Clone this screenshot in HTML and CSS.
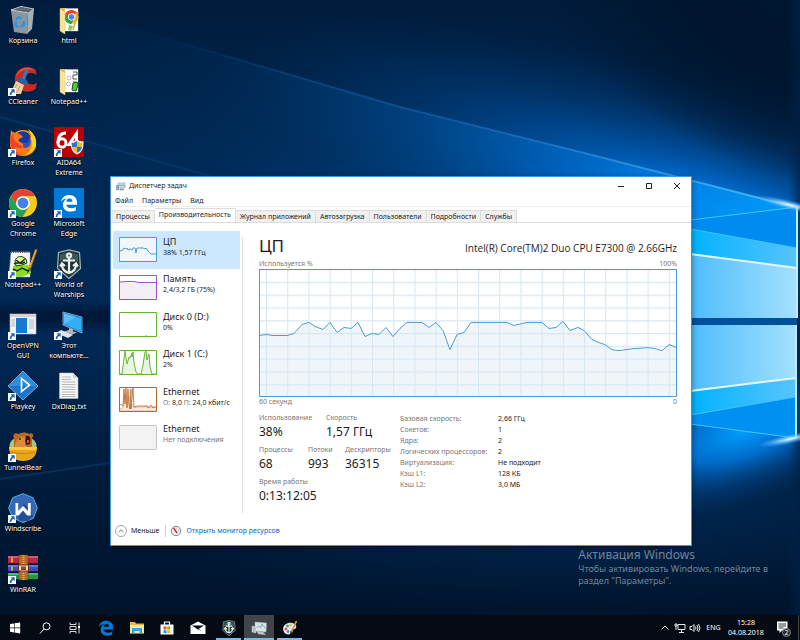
FILE: index.html
```html
<!DOCTYPE html>
<html lang="ru">
<head>
<meta charset="utf-8">
<title>Диспетчер задач</title>
<link rel="stylesheet" href="styles.css">
</head>
<body>
<svg class="wallpaper" viewBox="0 0 800 640" preserveAspectRatio="none" aria-hidden="true">
  <defs>
    <linearGradient id="base" x1="0" y1="0" x2="0" y2="1">
      <stop offset="0" stop-color="#001c3c"/><stop offset=".25" stop-color="#00264f"/><stop offset=".5" stop-color="#002a58"/><stop offset=".75" stop-color="#001c3c"/><stop offset="1" stop-color="#001128"/>
    </linearGradient>
    <radialGradient id="glow" gradientUnits="userSpaceOnUse" cx="0" cy="0" r="1" gradientTransform="translate(730 215) rotate(18) scale(520 125)">
      <stop offset="0" stop-color="#0090ff"/><stop offset=".3" stop-color="#0068cc" stop-opacity=".75"/><stop offset=".65" stop-color="#004c98" stop-opacity=".35"/><stop offset="1" stop-color="#003870" stop-opacity="0"/>
    </radialGradient>
    <radialGradient id="shade" gradientUnits="userSpaceOnUse" cx="0" cy="0" r="1" gradientTransform="translate(770 60) rotate(25) scale(250 110)">
      <stop offset="0" stop-color="#001126" stop-opacity=".75"/><stop offset=".5" stop-color="#001126" stop-opacity=".5"/><stop offset="1" stop-color="#001126" stop-opacity="0"/>
    </radialGradient>
    <linearGradient id="beam" x1="0" y1="0" x2="1" y2="0">
      <stop offset="0" stop-color="#0058a8" stop-opacity="0"/><stop offset=".25" stop-color="#0058a8" stop-opacity=".08"/><stop offset=".5" stop-color="#0060b4" stop-opacity=".28"/><stop offset=".75" stop-color="#0078dd" stop-opacity=".5"/><stop offset="1" stop-color="#00a0ff"/>
    </linearGradient>
    <linearGradient id="ray" gradientUnits="userSpaceOnUse" x1="130" y1="0" x2="798" y2="0">
      <stop offset="0" stop-color="#1a6fc4" stop-opacity="0"/><stop offset=".5" stop-color="#1a6fc4" stop-opacity=".55"/><stop offset="1" stop-color="#4cc0ff"/>
    </linearGradient>
    <radialGradient id="low" gradientUnits="userSpaceOnUse" cx="0" cy="0" r="1" gradientTransform="translate(745 430) rotate(-18) scale(190 75)">
      <stop offset="0" stop-color="#00a0ff"/><stop offset=".35" stop-color="#0078e0" stop-opacity=".85"/><stop offset=".7" stop-color="#0050a0" stop-opacity=".35"/><stop offset="1" stop-color="#003870" stop-opacity="0"/>
    </radialGradient>
    <radialGradient id="haze" gradientUnits="userSpaceOnUse" cx="0" cy="0" r="1" gradientTransform="translate(560 500) scale(480 120)">
      <stop offset="0" stop-color="#003c78" stop-opacity=".6"/><stop offset="1" stop-color="#002850" stop-opacity="0"/>
    </radialGradient>
    <linearGradient id="pane" x1="0" y1="0" x2="1" y2="0">
      <stop offset="0" stop-color="#4cbcfb"/><stop offset="1" stop-color="#a5e1ff"/>
    </linearGradient>
    <linearGradient id="cyan" x1="0" y1="0" x2="1" y2="0">
      <stop offset="0" stop-color="#00b2ff"/><stop offset="1" stop-color="#58c4fc"/>
    </linearGradient>
    <radialGradient id="flare"><stop offset="0" stop-color="#fff"/><stop offset=".3" stop-color="#9edcff" stop-opacity=".8"/><stop offset="1" stop-color="#38a8ff" stop-opacity="0"/></radialGradient>
    <linearGradient id="edge" x1="0" y1="0" x2="1" y2="0"><stop offset="0" stop-color="#002850" stop-opacity="0"/><stop offset="1" stop-color="#001e44" stop-opacity=".7"/></linearGradient>
    <filter id="soft" x="-20%" y="-60%" width="140%" height="220%"><feGaussianBlur stdDeviation="4"/></filter>
    <filter id="fine" filterUnits="userSpaceOnUse" x="0" y="0" width="800" height="640"><feGaussianBlur stdDeviation=".7"/></filter>
  </defs>
  <path fill="url(#base)" d="M0 0h800v640H0z"/>
  <path fill="url(#glow)" d="M0 0h800v640H0z"/>
  <path fill="url(#shade)" d="M0 0h800v640H0z"/>
  <path fill="url(#haze)" d="M0 380h800v260H0z"/>
  <path fill="url(#low)" d="M500 250h300v390H500z"/>
  <path fill="url(#beam)" d="M0-10 130 28 400 107l200 50 198 51-110 50H0z"/>
  <path fill="none" stroke="url(#ray)" stroke-width="2" filter="url(#fine)" d="m130 28 270 79 200 50 198 51"/>
  <path fill="none" stroke="#0c4a86" stroke-width="2" opacity=".4" filter="url(#fine)" d="m0 117 220 62M0 479l110-16"/>
  <path fill="#000f28" opacity=".65" filter="url(#soft)" d="M-10 308h125v18H-10z"/>
  <path fill="url(#edge)" d="M788 0h12v640h-12z"/>
  <path fill="#00509c" d="M690 316h107v11H690z"/>
  <path fill="#008bf0" d="m690 220 108-13v42l-108-20z"/>
  <path fill="url(#cyan)" d="m690 229 107 19v20l-107-14z"/>
  <path fill="url(#pane)" d="m690 254 107 14v50H690zM690 325h106v53l-106 13z"/>
  <path fill="url(#cyan)" d="m690 391 106-13v19l-106 18z"/>
  <path fill="#0090f2" d="m690 415 106-18v41l-106-14z"/>
  <g fill="none" filter="url(#fine)">
    <path stroke="#e4f7ff" stroke-width="2" d="m690 254 107 14M690 391l106-13"/>
    <path stroke="#43c5ff" d="m690 220 108-13M690 229l107 19M690 424l106 14M690 415l106-18"/>
    <path stroke="#c0ecff" stroke-width="2" d="M797 207v111M796 325v113"/>
  </g>
  <ellipse cx="790" cy="205" rx="38" ry="5" transform="rotate(14 790 205)" fill="url(#flare)"/>
  <ellipse cx="790" cy="439" rx="34" ry="5" transform="rotate(-12 790 439)" fill="url(#flare)"/>
</svg>

<svg class="defs" aria-hidden="true">
  <symbol id="arrow" viewBox="0 0 9 9"><path fill="#fff" d="M0 0h9v9H0z"/><path fill="#1762b5" d="M3 1.500h4.500V6L6 4.600C4.700 5 4 6 3.800 7.800H2C1.900 5.500 2.800 3.900 4.500 3z"/></symbol>
  <symbol id="wows" viewBox="0 0 30 30">
    <path fill="#1b3236" stroke="#a4b4b0" stroke-width="1.200" d="M15 .800 25.500 3.500l1 16L15 29.500 3.500 19.500l1-16z"/>
    <path fill="#3c5956" d="M15 3 24 5.500V13L15 10l-9 3V5.500z"/>
    <g fill="none" stroke="#e9efeb" stroke-width="2.200"><circle cx="15" cy="6.500" r="2"/><path d="M15 8.500V24M9 11.500h12M8 15c0 5 3 8 7 9 4-1 7-4 7-9M6 17.500l2-3 3 2.500M24 17.500l-2-3-3 2.500"/></g>
  </symbol>
  <symbol id="edge-e" viewBox="0 0 20 20"><path d="M1 9C1.600 4 5.300 1 10.300 1c5.400 0 8.700 3.700 8.700 8.500V12H7c.2 2.500 2.400 3.900 5.300 3.900 2 0 3.800-.5 5.400-1.500v3.700c-1.700.9-3.900 1.400-6.200 1.400-5 0-8.200-3-8.200-7.400 0-3.200 1.800-5.700 4.700-7C4.700 5.400 2.300 6.600 1 9zm6.100-.5h6.700c0-2.300-1.200-3.600-3.200-3.600S7.300 6.200 7.100 8.500z"/></symbol>
  <symbol id="folder" viewBox="0 0 30 30"><path fill="#dcb95b" d="M6 3h6l1 2h11v21H6z"/><path fill="#fff" stroke="#c9d1d6" stroke-width=".4" d="M11 3.500h13V26H11z"/></symbol>
  <symbol id="folder-front" viewBox="0 0 30 30"><path fill="#fbe49a" stroke="#e5c467" stroke-width=".4" d="m6 4 5 3v22l-5-3z"/></symbol>
  <symbol id="chrome" viewBox="0 0 30 30">
    <circle cx="15" cy="15" r="14" fill="#fbc91d"/>
    <path fill="#e34133" d="M2.900 8A14 14 0 0 1 27.100 8H15a7 7 0 0 0-6 10.500z"/>
    <path fill="#20a354" d="M2.900 8A14 14 0 0 0 14.500 29l6.500-10.500a7 7 0 0 1-12 0z"/>
    <circle cx="15" cy="15" r="6.800" fill="#fff"/><circle cx="15" cy="15" r="5.400" fill="#447ff1"/>
  </symbol>
</svg>

<main class="desktop">
  <nav class="icons" aria-label="Рабочий стол">
    <button class="icon"><svg viewBox="0 0 30 30"><path fill="#8a959e" d="m3 5 17 3-1 21-13-2z"/><path fill="#a3adb5" d="m20 8 6-4-2 20-5 5z"/><path fill="#5c6872" d="m4 5 9-3 12 2.500-4.500 3z"/><path fill="none" stroke="#c9d0d5" d="m3 5 17.500 3 5.500-4-13-2.500z"/><g fill="none" stroke="#2792e8" stroke-width="2.400"><path d="m8 15 2.500-3 3 1.500M15.500 16l.5 4-3.500 1.500M10.500 22 7.500 20.500l.5-4"/></g></svg><span>Корзина</span></button>
    <button class="icon"><svg viewBox="0 0 30 30"><path fill="#c92a22" d="M28 4.500C21-2 9 .5 7 11c-2 11 11 19 20.500 12L29 17c-5 3-12 1-11.500-5 .5-5 6-6.500 11-3z"/><path fill="#e9553e" d="M27 4C20-1 10 2.500 8.500 10 12 4 19 2 27 4z"/><path stroke="#2f7cc4" stroke-width="3" d="m19 3-4 12"/><path fill="#1c66ad" d="m11 11 9 4-2 4-9-4z"/><path fill="#f2cfa0" d="m8 15 8 4-3 9H1c3-3 4-7 7-13z"/><path fill="none" stroke="#c99a62" d="m9 18-4 9m7-7-3 7"/></svg><svg class="shortcut"><use href="#arrow"/></svg><span>CCleaner</span></button>
    <button class="icon"><svg viewBox="0 0 30 30"><circle cx="15" cy="16" r="13" fill="#ff9a14"/><circle cx="14" cy="14.500" r="9" fill="#2454c8"/><path fill="#143a9d" d="M8 7c4-4 11-4 15 2l-4 7-8-1z"/><path fill="#ff7a16" d="M3 3c1 2 3 3 5 3 3 0 5 2 7 4l-4 2c-1 2 0 3 1 3 3 1 4 3 3 5 2 2 5 1 7-2 2-4 1-9-2-13 6 3 9 9 8 15-2 6-7 9-13 9C6 29 1 22 2 14z"/><path fill="#ffd226" d="M20 2c6 4 9 10 8 16-1 5-5 9-10 10 5-5 7-10 5-16 1-3-1-7-3-10z"/><path fill="#f0432c" d="M2 13c0 9 5 16 13 16-5-2-8-5-8-9 2 1 5 2 8 0l-4-3-4-3c-2-2-2-5-1-7-2 1-3 3-4 6z"/></svg><svg class="shortcut"><use href="#arrow"/></svg><span>Firefox</span></button>
    <button class="icon"><svg viewBox="0 0 30 30"><use href="#chrome"/></svg><svg class="shortcut"><use href="#arrow"/></svg><span>Google<br>Chrome</span></button>
    <button class="icon"><svg viewBox="0 0 30 30"><path fill="#f6f7f4" stroke="#a8adb0" stroke-width=".6" d="M3 3h19v25H1z"/><path stroke="#555" stroke-width="2" stroke-dasharray="1 1.200" d="M3 3h19"/><path fill="#8edb25" d="m5 17 7-2 9 1 2 8-9 4H4z"/><path fill="#d8f8a0" stroke="#203d12" d="M7 12c1-5 7-6 11-2l1 4-5 2-6 1z"/><path fill="none" stroke="#173210" stroke-width="1.500" d="M6 15c4-3 6 1 11-2m-9-2 4 3 5-4M5 20l4 2 5-3 6 3"/><path stroke="#845025" stroke-width="2.600" d="m28.500 0-7 20"/><path stroke="#f2a735" stroke-width="1.700" d="m28 1-6.500 18"/><path fill="#252525" d="m20 20 2 1-3 4z"/></svg><svg class="shortcut"><use href="#arrow"/></svg><span>Notepad++</span></button>
    <button class="icon"><svg viewBox="0 0 30 30"><path fill="#eff1f2" stroke="#b6bec4" stroke-width=".6" d="M2 4h26v20H2z"/><path fill="#d0d4d8" d="M2 4h26v3H2z"/><path fill="#177ad2" d="M8 8h11v15H8z"/><path stroke="#a9b0b5" stroke-width=".8" d="M3.500 10H7m-3.500 2H7m-3.500 2H7m-3.500 2H7m14-6h5m-5 2h5m-5 2h5m-5 2h5m-5 2h5"/></svg><svg class="shortcut"><use href="#arrow"/></svg><span>OpenVPN<br>GUI</span></button>
    <button class="icon"><svg viewBox="0 0 30 30"><path fill="#1d75c9" stroke="#cbe5f8" stroke-width=".6" d="M15 0 30 15 15 29 0 15z"/><path fill="#3b9ee7" d="M15 1 29 15H1z" opacity=".6"/><path fill="none" stroke="#fff" stroke-width="1.600" d="M13.500 7.500v13l8-6.500z"/></svg><svg class="shortcut"><use href="#arrow"/></svg><span>Playkey</span></button>
    <button class="icon"><svg viewBox="0 0 30 30"><ellipse cx="15" cy="14" rx="13.500" ry="10" fill="#a8c582"/><path fill="#b96a25" d="M6 17V6c-2-4 2-6 4-4 4-2 8-2 11 0 3-2 6 1 3 4v11z"/><path fill="#d98a3d" d="M7 13c2-8 7-9 11-7v10H7z"/><circle cx="12" cy="7" r=".9" fill="#351612"/><path fill="#351612" d="M18 4c4-1 5 2 4 8l-4 1c-1-3-1-6 0-9z"/><path fill="#e04a45" d="M19 8h2v3h-2z"/><path fill="#e9a51b" d="M1 15h28c0 9-5 14-14 14S1 24 1 15z"/><path fill="#ffc93d" d="M1 15h28l-1 3H2z"/><path fill="none" stroke="#b8770e" stroke-width=".7" d="M3 20c7 2 17 2 24 0"/></svg><svg class="shortcut"><use href="#arrow"/></svg><span>TunnelBear</span></button>
    <button class="icon"><svg viewBox="0 0 30 30"><path fill="#3566b4" stroke="#4fb5df" d="m15 .700 10 4 4.300 10-4 10.600L15 29.500 4.700 25 .700 15l4-10.300z"/><path fill="#254e96" d="m9 22 7-12 9 13-5 5H12z"/><path fill="#fff" d="M7.500 10h2.700v8l4.800-5 5 5v-8h2.700v12.500h-3.500L15 17.500l-4.300 5H7.500z"/></svg><svg class="shortcut"><use href="#arrow"/></svg><span>Windscribe</span></button>
    <button class="icon"><svg viewBox="0 0 30 30"><path fill="#bc2448" d="M0 2h30v8H0z"/><path fill="#414bb8" d="M0 11h30v7H0z"/><path fill="#259a40" d="M0 19h30v7H0z"/><path stroke="#f08aa0" d="M0 3h30"/><path stroke="#99a0ef" d="M0 12h30"/><path stroke="#79dd80" d="M0 20h30"/><path stroke="#471324" d="M0 9.500h30M0 17.500h30M0 25.500h30"/><path stroke="#f3c229" stroke-width="1.600" d="M4 3.500v5M4 12.500v4"/><path fill="#b96c26" stroke="#5e300d" stroke-width=".5" d="M11 1h9v25h-9z"/><path stroke="#e7b34b" stroke-width="2" stroke-dasharray="1 1" d="M15.500 1v25"/><path fill="#e8dcc1" stroke="#78350d" d="M10.500 11h10v6h-10z"/><path fill="#94431a" d="M13 12.500h5V16h-5z"/></svg><svg class="shortcut"><use href="#arrow"/></svg><span>WinRAR</span></button>
    <button class="icon"><svg viewBox="0 0 30 30"><use href="#folder"/><svg x="10" y="4" width="15" height="16" viewBox="0 0 30 30"><use href="#chrome"/></svg><path stroke="#dca634" stroke-width="1.500" d="m24 7-5 18"/><path fill="#8fc85b" d="m15 20 4 1-2 5-3-1z"/><use href="#folder-front"/></svg><span>html</span></button>
    <button class="icon"><svg viewBox="0 0 30 30"><use href="#folder"/><path fill="none" stroke="#555" d="M19 6h4v3h-4v4h4m-4 3h3"/><path fill="#5cc838" stroke="#17581d" d="m19 17 4-1 1 3-2 6-4-1z"/><circle cx="15" cy="12" r="2" fill="none" stroke="#b0b9bf"/><circle cx="14.500" cy="18" r="2" fill="none" stroke="#b0b9bf"/><use href="#folder-front"/></svg><span>Notepad++</span></button>
    <button class="icon"><svg viewBox="0 0 30 30"><path fill="#b90006" d="M0 0h30v30H0z"/><g fill="none" stroke="#fff" stroke-width="3"><ellipse cx="8" cy="16" rx="4" ry="4.300"/><path d="M12 6C6 6 4 10 4 16M22.500 23V6.500l-7.500 11h12"/></g><path fill="#fff" d="M16.500 14.500c3 0 4-1 6.500-2 2 1 3 2 6.500 2 0 6-1 11-6.500 13-5-2-6.500-7-6.500-13z"/><path fill="#2777c9" d="M17.500 16c2 0 3.500-1 5.500-2v6h-5zM23 20h5c-1 3-2 5-5 6z"/><path fill="#f5b82a" d="M23 14c2 1 3 2 5.500 2L28 20h-5zM18 20h5v6c-3-1-4-3-5-6z"/></svg><svg class="shortcut"><use href="#arrow"/></svg><span>AIDA64<br>Extreme</span></button>
    <button class="icon"><svg viewBox="0 0 30 30"><path fill="#0078d7" d="M0 0h30v30H0z"/><svg x="6" y="5" width="18" height="20" fill="#fff"><use href="#edge-e"/></svg></svg><svg class="shortcut"><use href="#arrow"/></svg><span>Microsoft<br>Edge</span></button>
    <button class="icon"><svg viewBox="0 0 30 30"><use href="#wows"/></svg><svg class="shortcut"><use href="#arrow"/></svg><span>World of<br>Warships</span></button>
    <button class="icon"><svg viewBox="0 0 30 30"><path fill="#0a5faa" stroke="#a9d8f5" stroke-width=".7" d="m9 2 19 5v16L9 15z"/><path fill="#35adf4" d="m10 3 17 5v13.500L10 14.500z"/><path fill="#7fd0ff" d="m10 3 12 4-12 7z" opacity=".5"/><path fill="#aeb8be" d="m15 18 4 1.500v2l4 1-5 2-8-3 5-1.500z"/><path fill="#dfe5e8" d="m7 20 12 5-5 3-12-5z"/></svg><svg class="shortcut"><use href="#arrow"/></svg><span>Этот<br>компьюте...</span></button>
    <button class="icon"><svg viewBox="0 0 30 30"><path fill="#f7f7f7" stroke="#b9bcbe" stroke-width=".6" d="M5.500 2H19l5 5v20.500H5.500z"/><path fill="#cfd2d4" d="M19 2v5h5z"/><path stroke="#a3a6a8" stroke-width=".8" d="M8 6h9M8 8.500h9M8 11h13.500M8 13.500h13.500M8 16h13.500M8 18.500h13.500M8 21h13.500M8 23.500h13.500M8 25.500h13.500"/></svg><span>DxDiag.txt</span></button>
  </nav>

  <aside class="activation"><h2>Активация Windows</h2><p>Чтобы активировать Windows, перейдите в<br>раздел "Параметры".</p></aside>

  <section class="window" aria-label="Диспетчер задач">
    <header class="titlebar">
      <svg class="app-icon" viewBox="0 0 20 18"><path fill="#dbe5ea" stroke="#758995" d="M4 2h14v10H4z"/><path fill="none" stroke="#2387b8" stroke-width="1.300" d="m5 8 3-3 3 4 3-4 4 4"/><path fill="#aab8bf" stroke="#60727d" d="M1 7h4v9H1zM8 14h7v2H8z"/><path fill="#4fba57" d="M2 9h2v2H2z"/></svg>
      <h1>Диспетчер задач</h1>
      <div class="controls">
        <button aria-label="Свернуть"><svg viewBox="0 0 8 8"><path d="M1 4.500h6"/></svg></button>
        <button aria-label="Развернуть"><svg viewBox="0 0 8 8"><path d="M1.500 1.500h5v5h-5z"/></svg></button>
        <button aria-label="Закрыть"><svg viewBox="0 0 8 8"><path d="m1 1 6 6m0-6L1 7"/></svg></button>
      </div>
    </header>
    <nav class="menu"><button>Файл</button><button>Параметры</button><button>Вид</button></nav>
    <div class="tabs" role="tablist">
      <button role="tab">Процессы</button><button role="tab" aria-selected="true">Производительность</button><button role="tab">Журнал приложений</button><button role="tab">Автозагрузка</button><button role="tab">Пользователи</button><button role="tab">Подробности</button><button role="tab">Службы</button>
    </div>
    <div class="content">
      <div class="list">
        <button class="item selected"><svg viewBox="0 0 38 25"><path fill="#f1f6fa" stroke="#4a9dcf" d="M.5.500h37v24H.5z"/><path fill="none" stroke="#4a9dcf" d="m1 14 3-1 1-2 2 1 1-1 1 2 2-1h1l1 1 1-2h2l1 5 1-5h6l2 1 1-1 2 3 2 2 1 1h6"/></svg><span><b>ЦП</b><small>38% 1,57 ГГц</small></span></button>
        <button class="item"><svg viewBox="0 0 38 25"><path fill="#fff" d="M0 0h38v25H0z"/><path fill="#f3eff5" d="M1 7h36v17H1z"/><path fill="none" stroke="#a84fc0" d="M.5.500h37v24H.5zM1 7l8-.5h6l5 1h17"/></svg><span><b>Память</b><small>2,4/3,2 ГБ (75%)</small></span></button>
        <button class="item"><svg viewBox="0 0 38 25"><path fill="#fff" stroke="#67b633" d="M.5.500h37v24H.5z"/><path stroke="#67b633" d="M26 24h2"/></svg><span><b>Диск 0 (D:)</b><small>0%</small></span></button>
        <button class="item"><svg viewBox="0 0 38 25"><path fill="#fff" d="M0 0h38v25H0z"/><path fill="#e9f4e3" stroke="#67b633" d="M1 24h2l3-23 1 7 1 6 2-7 1 1 2-5v4l1-5 1 11 2 9 2 2h3l2-9 2-13 1-1 1 9 2-6 1 13 2 7h5"/><path fill="none" stroke="#67b633" d="M.5.500h37v24H.5z"/></svg><span><b>Диск 1 (C:)</b><small>2%</small></span></button>
        <button class="item"><svg viewBox="0 0 38 25"><path fill="#fff" d="M0 0h38v25H0z"/><path fill="#fbe9df" stroke="#e7a17f" stroke-width=".7" d="m1 22 3-1 2-14 2 13 2-11 1 13 2-5 2 4 3-1h6l4-1 3 1h7v4H1z"/><path fill="none" stroke="#b7662a" stroke-width=".8" d="m1 17 3 2 1-17 1 15 1-16 1 20 1-19 1 16 1 4 1-20v20l2-21 1 19 4-1h9l1 2 2-1 1-2 2 3 1-1h3"/><path fill="none" stroke="#b7662a" d="M.5.500h37v24H.5z"/></svg><span><b>Ethernet</b><small><i>О:</i> 8,0 <i>П:</i> 24,0 кбит/с</small></span></button>
        <button class="item"><svg viewBox="0 0 38 25"><rect x=".5" y=".5" width="37" height="24" rx="1" fill="#f3f3f3" stroke="#c3c3c3"/></svg><span><b>Ethernet</b><small><i>Нет подключения</i></small></span></button>
      </div>
      <div class="details">
        <div class="heading"><h2>ЦП</h2><p>Intel(R) Core(TM)2 Duo CPU E7300 @ 2.66GHz</p></div>
        <div class="axis"><span>Используется %</span><span>100%</span></div>
        <svg class="chart" viewBox="0 0 418 127" preserveAspectRatio="none" role="img" aria-label="Использование ЦП">
          <defs><pattern id="grid" x="7" y="0" width="21.200" height="12.700" patternUnits="userSpaceOnUse"><path fill="none" stroke="#d6e8f4" stroke-width="1.200" d="M.5 0v12.700M0 .500h21.200"/></pattern></defs>
          <path fill="#fff" d="M0 0h418v127H0z"/>
          <path fill="#f0f5fa" d="M0 66 7 65l7 1h14l7-2 8-9 7-2 6 4 8 3 7-7 7 10 7-5 7 1 7-6 7 14 7-3 7 1 7-7 7 9 7-8 7-6h15l7 5 7-5 7 8 7 19 7-15 7-2 7-10h36l7 3 13-3h15l7 6 7-1 7-6 7 9 8-3 6 3 8 9 7 3 6 2 7 5 7 1 14-2 15-1 7 1 7 2 7-6 8 3v48H0z"/>
          <path fill="url(#grid)" d="M0 0h418v127H0z"/>
          <path class="line" d="M0 66 7 65l7 1h14l7-2 8-9 7-2 6 4 8 3 7-7 7 10 7-5 7 1 7-6 7 14 7-3 7 1 7-7 7 9 7-8 7-6h15l7 5 7-5 7 8 7 19 7-15 7-2 7-10h36l7 3 13-3h15l7 6 7-1 7-6 7 9 8-3 6 3 8 9 7 3 6 2 7 5 7 1 14-2 15-1 7 1 7 2 7-6 8 3"/>
          <path class="line" d="M.5.500h417v126H.5z"/>
        </svg>
        <div class="axis"><span>60 секунд</span><span>0</span></div>
        <div class="stats">
          <div class="counters">
            <dl class="pair"><div><dt>Использование</dt><dd>38%</dd></div><div><dt>Скорость</dt><dd>1,57 ГГц</dd></div></dl>
            <dl class="triple"><div><dt>Процессы</dt><dd>68</dd></div><div><dt>Потоки</dt><dd>993</dd></div><div><dt>Дескрипторы</dt><dd>36315</dd></div></dl>
            <dl><div><dt>Время работы</dt><dd>0:13:12:05</dd></div></dl>
          </div>
          <table class="specs">
            <tr><th scope="row">Базовая скорость:</th><td>2,66 ГГц</td></tr>
            <tr><th scope="row">Сокетов:</th><td>1</td></tr>
            <tr><th scope="row">Ядра:</th><td>2</td></tr>
            <tr><th scope="row">Логических процессоров:</th><td>2</td></tr>
            <tr><th scope="row">Виртуализация:</th><td>Не подходит</td></tr>
            <tr><th scope="row">Кэш L1:</th><td>128 КБ</td></tr>
            <tr><th scope="row">Кэш L2:</th><td>3,0 МБ</td></tr>
          </table>
        </div>
      </div>
    </div>
    <footer class="statusbar">
      <button class="less"><svg viewBox="0 0 12 12"><circle cx="6" cy="6" r="5.500" fill="#fff" stroke="#909090" stroke-width=".8"/><path fill="none" stroke="#666" stroke-width=".9" d="M3.500 7.200 6 4.800l2.500 2.400"/></svg>Меньше</button>
      <a href="#"><svg viewBox="0 0 12 12"><circle cx="6" cy="6" r="4.700" fill="#f4f6f7" stroke="#7d858a"/><path stroke="#c6222c" stroke-width="1.400" d="m3.500 3 3.500 5"/><path stroke="#737a80" stroke-width=".8" d="m6 2.500.5 1M9 5l-1 .500"/></svg>Открыть монитор ресурсов</a>
    </footer>
  </section>
</main>

<footer class="taskbar">
  <div class="system">
    <button aria-label="Пуск"><svg viewBox="0 0 16 16"><path fill="#fff" d="m3 4 4-.600v4.200H3zM7.600 3.300 13.200 2.500v5.100H7.600zM3 8.200h4v4.200l-4-.600zM7.600 8.200h5.600v5.200l-5.600-.800z"/></svg></button>
    <button aria-label="Поиск"><svg viewBox="0 0 16 16"><g fill="none" stroke="#fff"><circle cx="9.500" cy="6.300" r="3.500"/><path d="m7 9-4 4.500"/></g></svg></button>
    <button aria-label="Представление задач"><svg viewBox="0 0 16 16"><path fill="none" stroke="#ddd" d="M3 2.500v2h6v-2M3 6.500h6v3H3zM3 13.500v-2h6v2M12 2.500v11"/><path fill="#fff" d="M11 6h2v2h-2z"/></svg></button>
  </div>
  <div class="tasks">
    <button aria-label="Microsoft Edge"><svg viewBox="0 0 20 20" fill="#0078d7"><use href="#edge-e" width="20" height="20"/></svg></button>
    <button aria-label="Проводник"><svg viewBox="0 0 16 16"><path fill="#e5b848" d="M1 2h5l1 1.500h8V13H1z"/><path fill="#ffe596" d="M1 5h14v8.500H1z"/><path fill="#3ba4df" d="M3 8h10v5.500h-2.500V11h-5v2.500H3z"/></svg></button>
    <button aria-label="Магазин"><svg viewBox="0 0 16 16"><path fill="none" stroke="#fff" stroke-width="1.200" d="M5.500 5V2h5v3"/><path fill="#fff" d="M1.500 4.500h13v10h-13z"/><path fill="#f25022" d="M4.500 6.500h3v3h-3z"/><path fill="#7fba00" d="M8.200 6.500h3v3h-3z"/><path fill="#00a4ef" d="M4.500 10.200h3v3h-3z"/><path fill="#ffb900" d="M8.200 10.200h3v3h-3z"/></svg></button>
    <button aria-label="Почта"><svg viewBox="0 0 16 16"><path fill="#fff" d="M.5 5.500 8 1.500l7.500 4v8.500H.500z"/><path fill="#070b14" d="M2 5.500h12L8.500 9l4 2.500L7 9z"/></svg></button>
    <button class="open" aria-label="World of Warships"><svg viewBox="0 0 30 30"><use href="#wows"/></svg></button>
    <button class="open current" aria-label="Диспетчер задач"><svg viewBox="0 0 16 16"><path fill="#c2cad0" d="m6 11 6 1 3 3-8-1z"/><path fill="#dfe4e7" stroke="#aab2b8" stroke-width=".5" d="m4 2 11.500 1-.5 9-11-1z"/><path fill="none" stroke="#5aa0c0" stroke-width=".8" d="m5.500 8 2-2.500 2 2.500 1.500-4 3 4"/><path fill="#b7bfc5" stroke="#eee" stroke-width=".4" d="m1 6 4 1v6l-4-1z"/></svg></button>
    <button class="open" aria-label="Paint"><svg viewBox="0 0 16 16"><path fill="#dce9ef" d="M1.500 11C-.5 6 5 2 10 3c5 1 6 6 1 6.500-2 0-2 2-3 4s-5.500 1-6.500-2.500z"/><circle cx="4" cy="9" r="1.300" fill="#d64b35"/><circle cx="5.500" cy="6" r="1.300" fill="#33a058"/><circle cx="8.500" cy="5" r="1.300" fill="#f5b932"/><circle cx="6" cy="11.500" r="1.300" fill="#347fc4"/><path stroke="#dc963f" stroke-width="1.800" d="m14.500 1-5 11"/><path fill="#815022" d="m8.500 11 2 1-3 3z"/></svg></button>
  </div>
  <div class="tray">
    <button aria-label="Скрытые значки"><svg viewBox="0 0 12 12"><path d="M2.500 7.500 6 4l3.500 3.500"/></svg></button>
    <button aria-label="Сеть"><svg viewBox="0 0 12 12"><path d="M4 2.500h7v5H4zM7.500 7.500V10M5 10.500h5M1 2h2v2H1zm1 2v4"/></svg></button>
    <button aria-label="Громкость"><svg viewBox="0 0 12 12"><path d="M1 4.500h2l2-2v7l-2-2H1zM6.500 4.500q1 1.500 0 3M8 3q2 3 0 6M9.500 2q3 4 0 8"/></svg></button>
    <button class="lang">ENG</button>
    <button class="clock"><time datetime="2018-08-04T15:28">15:28<br>04.08.2018</time></button>
    <button class="notify" aria-label="Уведомления"><svg viewBox="0 0 18 16"><path fill="#fff" stroke="none" d="M3 1.500h10.500v9H8L5.500 13v-2.500H3z"/><path stroke="#15202b" stroke-width=".9" d="M4.500 4h7.500M4.500 6h7.500M4.500 8h5"/></svg><span>2</span></button>
  </div>
</footer>
</body>
</html>
```
FILE: styles.css
```css
* { box-sizing: border-box; margin: 0; }

html, body { height: 100%; }

body {
  display: flex;
  flex-direction: column;
  overflow: hidden;
  background: #001a38;
  color: #1c1c1c;
  font: 7px/10px "Noto Sans", "Open Sans", sans-serif;
}

button {
  padding: 0;
  border: 0;
  background: none;
  color: inherit;
  font: inherit;
}

svg { display: block; flex: none; }
.wallpaper { position: absolute; inset: 0; z-index: -1; width: 100%; height: 100%; }
.defs { position: absolute; width: 0; height: 0; }

.desktop { position: relative; flex: 1; min-height: 0; }

/* Desktop shortcuts */
.icons {
  display: grid;
  grid-template-rows: repeat(10, 1fr);
  grid-auto-flow: column;
  grid-auto-columns: 46px;
  justify-content: start;
  height: 100%;
  padding-top: 5px;
}
.icon {
  display: flex;
  position: relative;
  flex-direction: column;
  align-items: center;
  justify-content: flex-start;
  gap: 1px;
  color: #fff;
  text-shadow: 0 1px 1px #000, 0 0 2px #000;
  white-space: nowrap;
}
.icon > svg:first-child { width: 30px; height: 30px; }
.icon .shortcut { position: absolute; top: 22px; left: 8px; width: 8px; height: 8px; }

.activation { position: absolute; right: 32px; bottom: 28px; color: #71859a; }
.activation h2 { font-size: 12px; font-weight: 400; line-height: 16px; }
.activation p { font-size: 9px; line-height: 12px; }

/* Task manager window */
.window {
  display: flex;
  position: absolute;
  inset: 176px 108px 69px 110px;
  flex-direction: column;
  border: 1px solid #3d97dd;
  background: #fff;
  box-shadow: 0 2px 6px #0006;
}
.titlebar { display: flex; align-items: center; height: 18px; padding-left: 5px; gap: 3px; }
.titlebar h1 { font-size: 7px; font-weight: 400; }
.app-icon { width: 10px; height: 9px; }
.controls { display: flex; margin-left: auto; }
.controls button { display: grid; place-items: center; width: 28px; height: 16px; }
.controls svg { width: 8px; height: 8px; fill: none; stroke: #222; }

.menu { display: flex; gap: 9px; height: 12px; padding-left: 4px; border-bottom: 1px solid #eee; }

.tabs { display: flex; align-items: flex-end; height: 16px; padding-left: 1px; border-bottom: 1px solid #dcdcdc; }
.tabs button {
  height: 12px;
  padding: 0 4px;
  border: 1px solid #dcdcdc;
  border-width: 1px 1px 0 0;
  background: #f0f0f0;
}
.tabs [aria-selected] { height: 14px; background: #fff; padding-bottom: 2px; }

.content { display: flex; flex: 1; min-height: 0; padding: 8px 14px 4px 2px; }
.list { display: grid; grid-template-rows: repeat(6, 1fr); width: 127px; height: 225px; }
.item { display: flex; align-items: center; gap: 6px; padding-left: 6px; text-align: left; white-space: nowrap; }
.item.selected { background: #cce8ff; }
.item svg { width: 38px; height: 25px; }
.item span { padding-bottom: 6px; }
.item b, .item small { display: block; }
.item b { font-size: 9px; font-weight: 400; line-height: 12px; }
.item small { font-size: 7px; }
.item i { color: #767676; font-style: normal; }

.details { flex: 1; min-width: 0; margin: 6px 0 0 2px; padding-left: 16px; border-left: 1px solid #dedede; }
.heading { display: flex; align-items: baseline; justify-content: space-between; height: 22px; }
.heading h2 { font-size: 17px; font-weight: 400; line-height: 17px; }
.heading p { font-family: "Open Sans", sans-serif; font-size: 10px; }
.axis { display: flex; justify-content: space-between; color: #777; }
.chart { width: 100%; height: 128px; }
.line { fill: none; stroke: #4a9dcf; vector-effect: non-scaling-stroke; }

.stats { display: flex; margin-top: 6px; }
.counters { width: 141px; }
.counters dl { display: grid; height: 32px; }
.counters dt { color: #777; }
.counters dd { margin: 0; font-size: 12px; line-height: 18px; }
.pair { grid-template-columns: 67px 1fr; }
.triple { grid-template-columns: 49px 37px 1fr; }
.specs { align-self: flex-start; height: 78px; border-spacing: 0; white-space: nowrap; }
.specs th, .specs td { padding: 0; font-weight: 400; text-align: left; }
.specs th { width: 98px; color: #777; }

.statusbar { display: flex; align-items: center; height: 28px; padding-left: 4px; }
.less, .statusbar a { display: flex; align-items: center; gap: 4px; }
.less { padding-right: 6px; border-right: 1px solid #d0d0d0; }
.statusbar a { padding-left: 4px; color: #0066cc; text-decoration: none; }
.statusbar svg { width: 12px; height: 12px; }

/* Taskbar */
.taskbar { display: flex; height: 25px; background: #060a12; color: #fff; }
.taskbar button { display: grid; place-items: center; }
.system { display: flex; }
.system button { width: 30px; }
.system svg, .tasks svg { width: 16px; height: 16px; }
.tasks { display: grid; grid-template-columns: repeat(7, 1fr); width: 214px; margin-left: 1px; }
.tasks .open { margin: 0 3px; border-bottom: 2px solid #76b9ed; padding-top: 2px; }
.tasks .current { margin: 0; background: #414449; }
.tray { display: flex; margin-left: auto; padding-right: 1px; }
.tray button { width: 15px; }
.tray svg { width: 12px; height: 12px; fill: none; stroke: #fff; stroke-width: .9; }
.tray .lang { width: 23px; }
.tray .clock { width: 42px; text-align: center; }
.tray .notify { position: relative; width: 32px; border-right: 1px solid #444; }
.tray .notify svg { width: 18px; height: 16px; }
.notify span {
  position: absolute;
  right: 7px;
  bottom: 3px;
  width: 9px;
  border: 1px solid #888;
  border-radius: 50%;
  background: #252a30;
  line-height: 7px;
}
```
